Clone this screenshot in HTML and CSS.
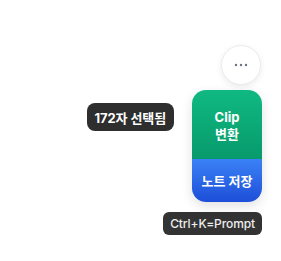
FILE: index.html
```html
<!DOCTYPE html>
<html lang="ko">
<head>
<meta charset="utf-8">
<link rel="stylesheet" href="styles.css">
</head>
<body>
<div class="dock">
  <button class="more" aria-label="더보기">
    <svg width="14" height="4" viewBox="0 0 14 4"><circle cx="2" cy="2" r="1.2"/><circle cx="7" cy="2" r="1.2"/><circle cx="12" cy="2" r="1.2"/></svg>
  </button>
  <div class="row">
    <div class="tip">172자 선택됨</div>
    <div class="card">
      <div class="clip">Clip<br>변환</div>
      <div class="save">노트 저장</div>
    </div>
  </div>
  <div class="hint">Ctrl+K=Prompt</div>
</div>
</body>
</html>
```
FILE: styles.css
```css
html, body {
  margin: 0;
  background: #ffffff;
  font-family: Inter, "Noto Sans CJK KR", sans-serif;
}
.dock {
  display: flex;
  flex-direction: column;
  align-items: flex-end;
  padding: 45px 19px 0 0;
}
.more {
  width: 40px;
  height: 40px;
  margin-right: 1px;
  border-radius: 50%;
  border: 1px solid #ececec;
  background: #fff;
  box-shadow: 0 2px 6px rgba(0,0,0,0.08);
  display: flex;
  align-items: center;
  justify-content: center;
  padding: 0;
}
.more svg { fill: #6b7280; }
.row {
  display: flex;
  align-items: flex-start;
  gap: 18px;
  margin-top: 5px;
}
.tip {
  margin-top: 13px;
  height: 28px;
  padding: 0 8px;
  box-sizing: border-box;
  display: flex;
  align-items: center;
  background: #2e2e2e;
  color: #fff;
  font-size: 13px;
  font-weight: 700;
  letter-spacing: -0.1px;
  border-radius: 8px;
  white-space: nowrap;
}
.card {
  width: 70px;
  height: 112px;
  border-radius: 14px;
  overflow: hidden;
  display: flex;
  flex-direction: column;
  box-shadow: 0 4px 12px rgba(0,0,0,0.12);
}
.clip {
  height: 69px;
  background: linear-gradient(180deg, #10b981, #079a6c);
  color: #fff;
  font-weight: 700;
  font-size: 13px;
  line-height: 17px;
  text-align: center;
  display: flex;
  align-items: center;
  justify-content: center;
  padding-top: 2px;
  box-sizing: border-box;
}
.save {
  flex: 1;
  background: linear-gradient(180deg, #3b82f6, #1d4ed8);
  color: #fff;
  font-weight: 700;
  font-size: 13px;
  display: flex;
  align-items: center;
  justify-content: center;
}
.hint {
  margin-top: 10px;
  height: 23px;
  padding: 0 7px;
  box-sizing: border-box;
  display: flex;
  align-items: center;
  background: #333333;
  color: #eeeeee;
  font-size: 12px;
  font-weight: 500;
  letter-spacing: -0.1px;
  border-radius: 6px;
}
```
